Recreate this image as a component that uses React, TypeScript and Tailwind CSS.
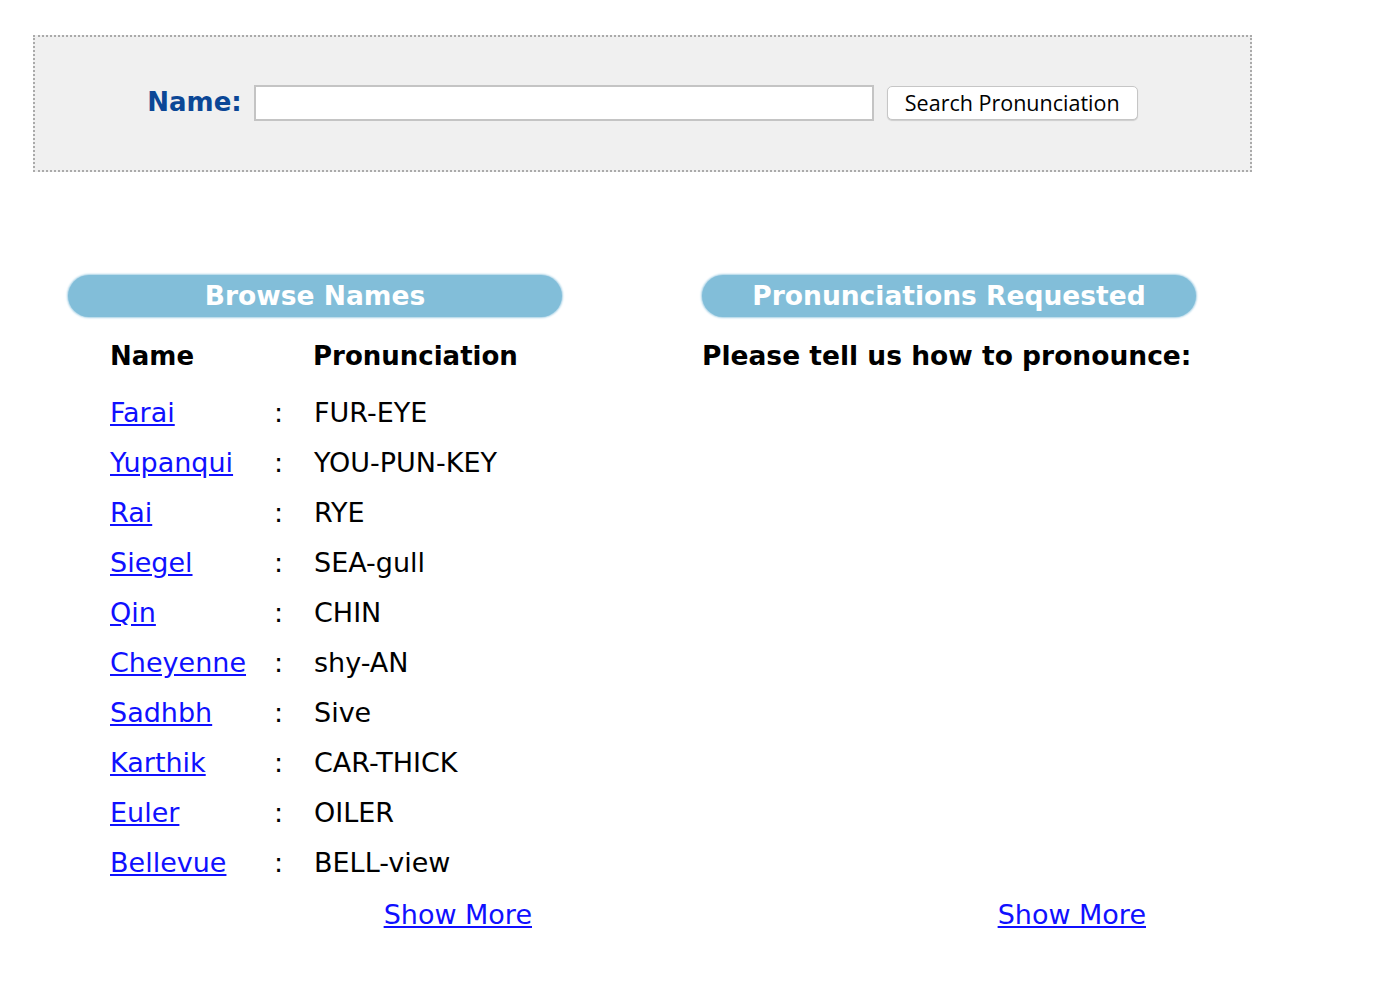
import React from "react";

const names: [string, string][] = [
  ["Farai", "FUR-EYE"],
  ["Yupanqui", "YOU-PUN-KEY"],
  ["Rai", "RYE"],
  ["Siegel", "SEA-gull"],
  ["Qin", "CHIN"],
  ["Cheyenne", "shy-AN"],
  ["Sadhbh", "Sive"],
  ["Karthik", "CAR-THICK"],
  ["Euler", "OILER"],
  ["Bellevue", "BELL-view"],
];

function Pill({ children }: { children: React.ReactNode }) {
  return (
    <div className="flex h-[42px] w-[494px] items-center justify-center rounded-full bg-[#82bed9] text-[26.5px] font-bold text-white shadow-[0_0_2px_1px_#a9d2e6]">
      {children}
    </div>
  );
}

export default function App() {
  return (
    <div className="min-h-screen bg-white pt-[35px] pl-[33px] font-['DejaVu_Sans',Verdana,sans-serif] text-black">
      {/* search box */}
      <div className="flex h-[137px] w-[1219px] items-center justify-center border-2 border-dotted border-[#aaaaaa] bg-[#f0f0f0] pb-[2px]">
        <label className="mr-[12px] text-[26px] font-bold text-[#0b4796]">Name:</label>
        <input
          type="text"
          className="h-[36px] w-[620px] border-2 border-[#c4c4c4] bg-white outline-none"
        />
        <button className="ml-[13px] h-[34px] w-[251px] rounded-[5px] border border-[#c6c6c6] bg-white pb-[2px] font-['Open_Sans',Arial,sans-serif] text-[21.5px] text-black shadow-[0_1px_1px_rgba(0,0,0,0.15)]">
          Search Pronunciation
        </button>
      </div>

      {/* two columns */}
      <div className="mt-[103px] ml-[35px] grid grid-cols-[494px_494px] gap-x-[140px]">
        <div>
          <Pill>Browse Names</Pill>
          <div className="pl-[42px]">
            <div className="mt-[14px] grid h-[50px] grid-cols-[164px_39px_1fr] items-center text-[26px] font-bold">
              <span>Name</span>
              <span />
              <span>Pronunciation</span>
            </div>
            <div className="mt-[7px]">
              {names.map(([n, p]) => (
                <div
                  key={n}
                  className="grid h-[50px] grid-cols-[164px_40px_1fr] items-center text-[27px]"
                >
                  <a href="#" className="text-[#1010ff] underline">
                    {n}
                  </a>
                  <span>:</span>
                  <span>{p}</span>
                </div>
              ))}
            </div>
          </div>
        </div>
        <div>
          <Pill>Pronunciations Requested</Pill>
          <div className="mt-[14px] flex h-[50px] items-center text-[26.5px] font-bold">
            Please tell us how to pronounce:
          </div>
        </div>

        <div className="flex h-[50px] items-center justify-end pt-[4px] pr-[30px]">
          <a href="#" className="text-[27px] text-[#1010ff] underline">
            Show More
          </a>
        </div>
        <div className="flex h-[50px] items-center justify-end pt-[4px] pr-[50px]">
          <a href="#" className="text-[27px] text-[#1010ff] underline">
            Show More
          </a>
        </div>
      </div>
    </div>
  );
}
